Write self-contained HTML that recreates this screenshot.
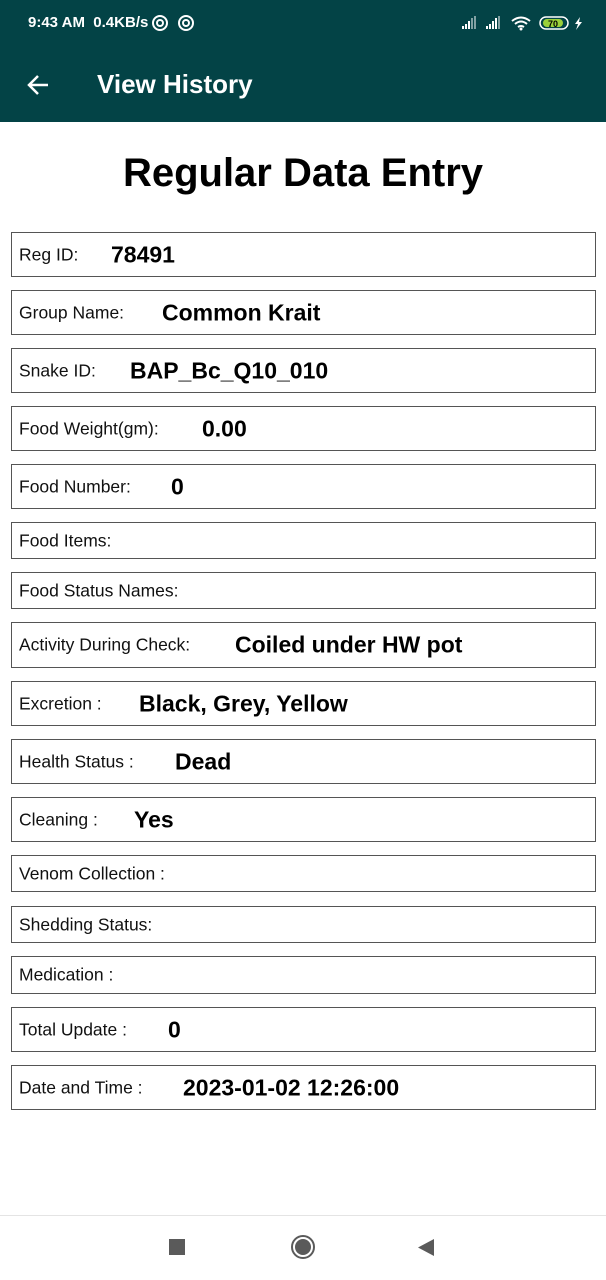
<!DOCTYPE html>
<html><head><meta charset="utf-8"><style>
*{margin:0;padding:0;box-sizing:border-box}
body{width:606px;height:1280px;background:#fff;font-family:"Liberation Sans",sans-serif;position:relative;overflow:hidden}
.hdr{position:absolute;left:0;top:0;width:606px;height:122px;background:#034346;color:#fff}
.row{position:absolute;left:11px;width:585px;border:1px solid #555;}
.row span{position:absolute;top:50%;transform:translateY(-50%);white-space:nowrap}
.l{left:7px;font-size:17.5px;color:#111}
.v{font-size:23px;font-weight:bold;color:#000}
</style></head><body>
<div class="hdr">
<div style="position:absolute;left:28px;top:14px;font-size:15px;font-weight:bold">9:43 AM&nbsp; 0.4KB/s</div>
<svg style="position:absolute;left:152px;top:14px" width="44" height="18"><circle cx="8" cy="9" r="7" fill="none" stroke="#fff" stroke-width="2"/><circle cx="8" cy="9" r="3" fill="none" stroke="#fff" stroke-width="2"/><circle cx="34" cy="9" r="7" fill="none" stroke="#fff" stroke-width="2"/><circle cx="34" cy="9" r="3" fill="none" stroke="#fff" stroke-width="2"/></svg>
<svg style="position:absolute;left:460px;top:14px" width="126" height="18">
<g fill="#fff"><rect x="2" y="12" width="2" height="3"/><rect x="5" y="10" width="2" height="5"/><rect x="8" y="7" width="2" height="8"/><rect x="11" y="4" width="2" height="11" opacity=".5"/><rect x="14" y="2" width="2" height="13" opacity=".5"/>
<rect x="26" y="12" width="2" height="3"/><rect x="29" y="10" width="2" height="5"/><rect x="32" y="7" width="2" height="8"/><rect x="35" y="4" width="2" height="11"/><rect x="38" y="2" width="2" height="13" opacity=".5"/></g>
<path d="M52 7 Q61 0 70 7 M55 10 Q61 5 67 10 M58 13 Q61 11 64 13" stroke="#fff" stroke-width="2" fill="none"/><circle cx="61" cy="15" r="1.5" fill="#fff"/>
<rect x="80" y="3" width="28" height="12" rx="6" fill="none" stroke="#fff" stroke-width="1.5"/><rect x="83" y="5" width="20" height="8" rx="4" fill="#9bd13a"/><text x="88" y="13" font-size="9" font-weight="bold" fill="#000" font-family="Liberation Sans">70</text>
<path d="M120 3 L115 10 H118 L116 16 L122 8 H119 Z" fill="#fff"/></svg>
<svg style="position:absolute;left:26px;top:73px" width="24" height="24"><path d="M22 12H4M12 3L3 12L12 21" stroke="#fff" stroke-width="2.5" fill="none"/></svg>
<div style="position:absolute;left:97px;top:69px;font-size:26px;font-weight:bold">View History</div>
</div>
<div style="position:absolute;left:0;width:606px;top:151px;text-align:center;font-size:40px;font-weight:bold">Regular Data Entry</div>

<div class="row" style="top:232px;height:45px"><span class="l">Reg ID:</span><span class="v" style="left:99px">78491</span></div>
<div class="row" style="top:290px;height:45px"><span class="l">Group Name:</span><span class="v" style="left:150px">Common Krait</span></div>
<div class="row" style="top:348px;height:45px"><span class="l">Snake ID:</span><span class="v" style="left:118px">BAP_Bc_Q10_010</span></div>
<div class="row" style="top:406px;height:45px"><span class="l">Food Weight(gm):</span><span class="v" style="left:190px">0.00</span></div>
<div class="row" style="top:464px;height:45px"><span class="l">Food Number:</span><span class="v" style="left:159px">0</span></div>
<div class="row" style="top:522px;height:37px"><span class="l">Food Items:</span></div>
<div class="row" style="top:572px;height:37px"><span class="l">Food Status Names:</span></div>
<div class="row" style="top:622px;height:46px"><span class="l">Activity During Check:</span><span class="v" style="left:223px">Coiled under HW pot</span></div>
<div class="row" style="top:681px;height:45px"><span class="l">Excretion :</span><span class="v" style="left:127px">Black, Grey, Yellow</span></div>
<div class="row" style="top:739px;height:45px"><span class="l">Health Status :</span><span class="v" style="left:163px">Dead</span></div>
<div class="row" style="top:797px;height:45px"><span class="l">Cleaning :</span><span class="v" style="left:122px">Yes</span></div>
<div class="row" style="top:855px;height:37px"><span class="l">Venom Collection :</span></div>
<div class="row" style="top:906px;height:37px"><span class="l">Shedding Status:</span></div>
<div class="row" style="top:956px;height:38px"><span class="l">Medication :</span></div>
<div class="row" style="top:1007px;height:45px"><span class="l">Total Update :</span><span class="v" style="left:156px">0</span></div>
<div class="row" style="top:1065px;height:45px"><span class="l">Date and Time :</span><span class="v" style="left:171px">2023-01-02 12:26:00</span></div>

<div style="position:absolute;left:0;top:1215px;width:606px;height:1px;background:#e4e4e4"></div>
<div style="position:absolute;left:169px;top:1239px;width:16px;height:16px;background:#5a5a5a"></div>
<svg style="position:absolute;left:289px;top:1234px" width="28" height="28"><circle cx="14" cy="13" r="11" fill="none" stroke="#5a5a5a" stroke-width="2"/><circle cx="14" cy="13" r="8" fill="#5a5a5a"/></svg>
<svg style="position:absolute;left:416px;top:1238px" width="20" height="20"><path d="M18 1V18L2 9.5Z" fill="#5a5a5a"/></svg>
</body></html>
